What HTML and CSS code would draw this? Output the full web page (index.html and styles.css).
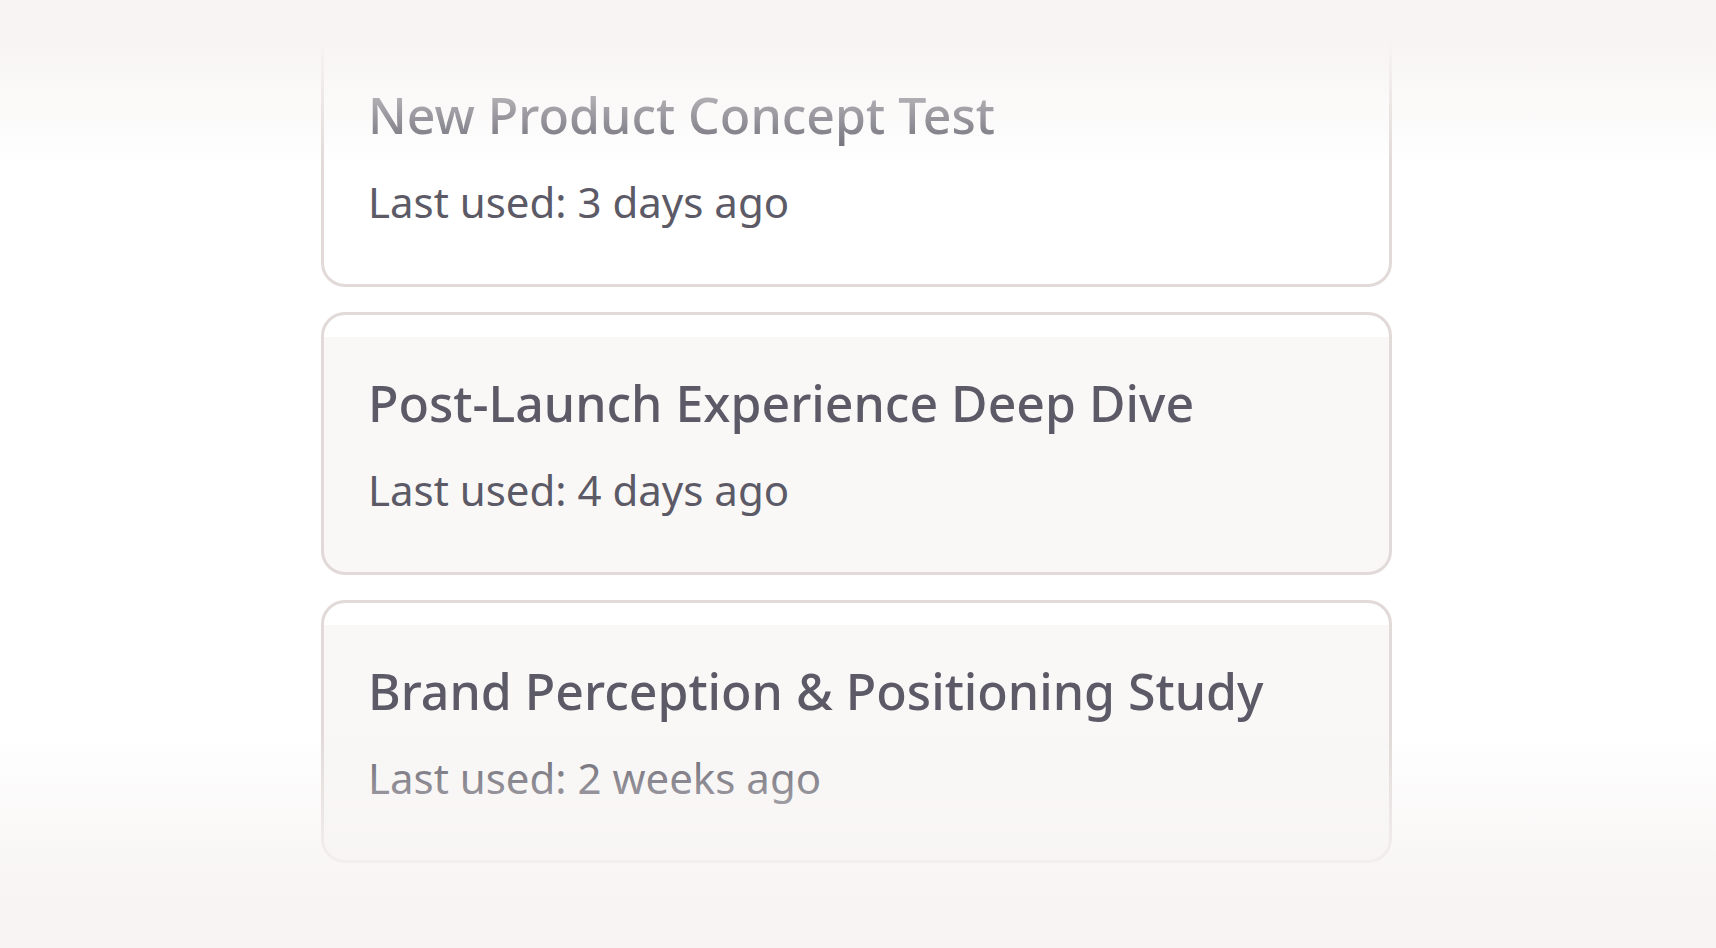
FILE: index.html
```html
<!DOCTYPE html>
<html lang="en">
<head>
<meta charset="utf-8">
<title>Templates</title>
<link rel="stylesheet" href="styles.css">
</head>
<body>
<main class="list">
  <article class="card">
    <h2 class="card-title">New Product Concept Test</h2>
    <p class="card-meta">Last used: 3 days ago</p>
  </article>
  <article class="card card-tinted">
    <h2 class="card-title">Post-Launch Experience Deep Dive</h2>
    <p class="card-meta">Last used: 4 days ago</p>
  </article>
  <article class="card card-tinted">
    <h2 class="card-title">Brand Perception &amp; Positioning Study</h2>
    <p class="card-meta">Last used: 2 weeks ago</p>
  </article>
</main>
<div class="fade fade-top"></div>
<div class="fade fade-bottom"></div>
</body>
</html>
```

FILE: styles.css
```css
html, body {
  margin: 0;
  padding: 0;
  height: 100%;
  overflow: hidden;
  background: #ffffff;
  font-family: "Noto Sans", "Open Sans", sans-serif;
  color: #5c5a66;
}

.list {
  width: 1071px;
  margin-left: calc(50% - 537px);
  padding-top: 24px;
  display: flex;
  flex-direction: column;
  gap: 25px;
}

.card {
  box-sizing: border-box;
  height: 263px;
  border: 3px solid #e1dad8;
  border-radius: 24px;
  background: #ffffff;
  padding: 58px 44px 0 44px;
  display: flex;
  flex-direction: column;
}

.card-tinted {
  background: linear-gradient(#ffffff 0, #ffffff 22px, #f9f8f7 22px, #f9f8f7 100%);
}

.card-title {
  margin: 0;
  font-size: 50px;
  line-height: 60px;
  font-weight: 500;
  color: #5c5a66;
  white-space: nowrap;
}

.card-meta {
  margin: 32px 0 0 0;
  font-size: 42px;
  line-height: 50px;
  font-weight: 400;
  color: #5c5a66;
  white-space: nowrap;
}

.fade {
  position: fixed;
  left: 0;
  right: 0;
  pointer-events: none;
}

.fade-top {
  top: 0;
  height: 170px;
  background: linear-gradient(to bottom, #f7f4f3 0, #f7f4f3 40px, rgba(255, 253, 253, 0) 168px);
}

.fade-bottom {
  bottom: 0;
  height: 220px;
  background: linear-gradient(to top, #f7f4f3 0, #f7f4f3 48px, rgba(255, 253, 253, 0) 218px);
}
```
